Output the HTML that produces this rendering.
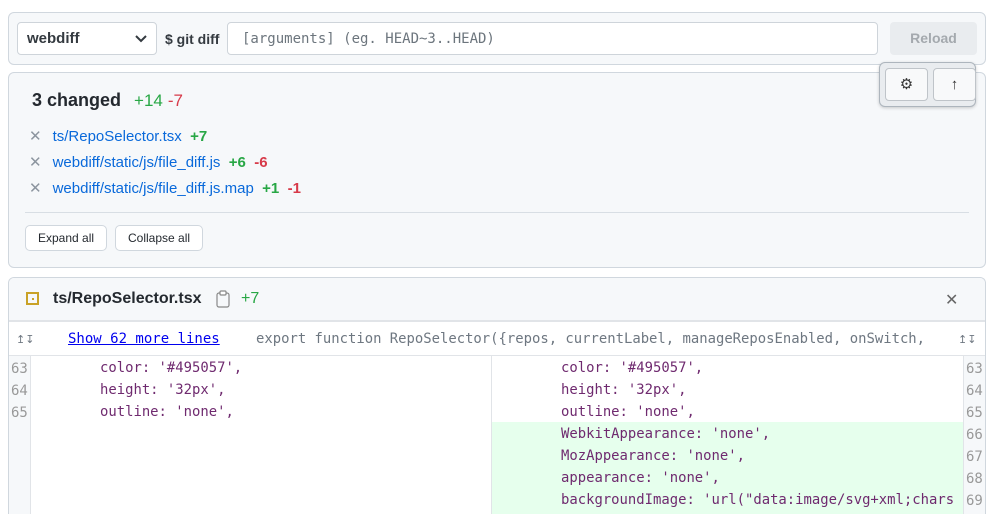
<!DOCTYPE html>
<html><head><meta charset="utf-8"><style>
*{box-sizing:border-box}
html,body{margin:0;width:996px;height:514px;overflow:hidden;background:#fff;font-family:"Liberation Sans",sans-serif;position:relative}
.card{position:absolute;left:8px;width:978px;border:1px solid #d0d7de;border-radius:6px;background:#f6f8fa}
.top{top:12px;height:53px}
.sel{position:absolute;left:8px;top:9px;width:140px;height:33px;border:1px solid #ced4da;border-radius:4px;background:#fff;font-weight:bold;font-size:15px;color:#343a40;padding:7px 0 0 9px}
.sel svg{position:absolute;right:9px;top:12px}
.lbl{position:absolute;left:156px;top:18px;font-weight:bold;font-size:14px;color:#343a40}
.inp{position:absolute;left:218px;top:9px;width:651px;height:33px;border:1px solid #ced4da;border-radius:4px;background:#fff;font-family:"DejaVu Sans Mono",monospace;font-size:14px;color:#6c757d;padding:8px 0 0 14px}
.rel{position:absolute;left:881px;top:9px;width:87px;height:33px;background:#e9ecef;border-radius:4px;color:#a4a9ae;font-weight:bold;font-size:14px;text-align:center;line-height:33px}
.sum{top:72px;height:196px}
.h{position:absolute;left:23px;top:17px;font-size:18px;font-weight:bold;color:#24292f}
.g{color:#28a745}.r{color:#d73a49}
.f{position:absolute;left:20px;font-size:15px;color:#0969da}
.f .x{color:#8c959f;margin-right:11px;font-size:15px}
.f b{font-weight:bold}
.hr{position:absolute;left:16px;right:16px;top:139px;border-top:1px solid #d8dee4}
.btn{position:absolute;top:152px;height:26px;border:1px solid #d0d7de;border-radius:5px;background:#fff;font-size:12px;color:#24292f;line-height:24px;padding:0 12px}
.tb{position:absolute;left:879px;top:62px;width:97px;height:45px;background:#e9ecef;border:1px solid #adb5bd;border-radius:6px;box-shadow:0 1px 3px rgba(0,0,0,.2)}
.tb div{position:absolute;top:5px;width:43px;height:33px;background:#f8f9fa;border:1px solid #bfc4c9;border-radius:4px;text-align:center;line-height:31px;font-size:15px;color:#333}
.file{position:absolute;left:8px;top:277px;width:978px;height:237px;border:1px solid #d0d7de;border-bottom:none;border-radius:6px 6px 0 0;background:#fff;overflow:hidden}
.fh{height:44px;background:#f6f8fa;border-bottom:2px solid #e1e4e8;position:relative}
.mono{font-family:"DejaVu Sans Mono",monospace;font-size:14px}
.exp{position:absolute;top:45px;left:0;right:0;height:33px;border-bottom:1px solid #e1e4e8;color:#6e7781}
.ln{position:absolute;width:22px;font-family:"DejaVu Sans Mono",monospace;font-size:14px;color:#999;text-align:center}
.code{position:absolute;font-family:"DejaVu Sans Mono",monospace;font-size:13.9px;color:#6f2a6f;white-space:pre;line-height:22px}
</style></head><body>
<div class="card top">
 <div class="sel">webdiff<svg width="12" height="8" viewBox="0 0 12 8"><path d="M1 1l5 5 5-5" stroke="#343a40" stroke-width="2" fill="none"/></svg></div>
 <div class="lbl">$ git diff</div>
 <div class="inp">[arguments] (eg. HEAD~3..HEAD)</div>
 <div class="rel">Reload</div>
</div>
<div class="card sum">
 <div class="h">3 changed <span style="font-weight:normal;font-size:17px;margin-left:8px" class="g">+14</span> <span style="font-weight:normal;font-size:17px" class="r">-7</span></div>
 <div class="f" style="top:54px"><span class="x">✕</span>ts/RepoSelector.tsx <b class="g">&nbsp;+7</b></div>
 <div class="f" style="top:80px"><span class="x">✕</span>webdiff/static/js/file_diff.js <b class="g">&nbsp;+6</b> <b class="r">&nbsp;-6</b></div>
 <div class="f" style="top:106px"><span class="x">✕</span>webdiff/static/js/file_diff.js.map <b class="g">&nbsp;+1</b> <b class="r">&nbsp;-1</b></div>
 <div class="hr"></div>
 <div class="btn" style="left:16px">Expand all</div>
 <div class="btn" style="left:106px">Collapse all</div>
</div>
<div class="file">
 <div class="fh">
  <div style="position:absolute;left:17px;top:14px;width:13px;height:13px;border:2px solid #c9a227"><div style="position:absolute;left:3.5px;top:3.5px;width:2px;height:2px;background:#c9a227"></div></div>
  <div style="position:absolute;left:44px;top:12px;font-weight:bold;font-size:16px;color:#24292f">ts/RepoSelector.tsx</div>
  <svg style="position:absolute;left:207px;top:12px" width="14" height="18" viewBox="0 0 14 18"><rect x="1" y="3" width="12" height="14" rx="2" fill="none" stroke="#888" stroke-width="1.2"/><rect x="4" y="1" width="6" height="4" rx="1" fill="#fff" stroke="#888" stroke-width="1.2"/></svg>
  <div style="position:absolute;left:232px;top:12px;font-size:16px" class="g">+7</div>
  <div style="position:absolute;left:936px;top:12px;font-size:16px;color:#666">✕</div>
 </div>
 <div class="exp">
  <span style="position:absolute;left:7px;top:10px;font-size:11px">↥↧</span>
  <span class="mono" style="position:absolute;left:59px;top:8px;color:#00e;text-decoration:underline">Show 62 more lines</span>
  <span class="mono" style="position:absolute;left:247px;top:8px;white-space:pre;font-size:13.9px">export function RepoSelector({repos, currentLabel, manageReposEnabled, onSwitch,</span>
  <span style="position:absolute;left:949px;top:10px;font-size:11px">↥↧</span>
 </div>
 <div style="position:absolute;left:0;top:78px;width:22px;height:200px;background:#f6f8fa;border-right:1px solid #e1e4e8"></div>
 <div style="position:absolute;left:482px;top:78px;width:1px;height:200px;background:#e1e4e8"></div>
 <div style="position:absolute;left:483px;top:144px;width:471px;height:120px;background:#e6ffed"></div>
 <div style="position:absolute;left:954px;top:78px;width:24px;height:200px;background:#f6f8fa;border-left:1px solid #e1e4e8"></div>
 <div class="ln" style="left:0;top:80px;line-height:22px;text-align:left;padding-left:2px">63<br>64<br>65</div>
 <div class="ln" style="left:955px;top:80px;line-height:22px;text-align:left;padding-left:2px">63<br>64<br>65<br>66<br>67<br>68<br>69</div>
 <div class="code" style="left:91px;top:79px">color: '#495057',
height: '32px',
outline: 'none',</div>
 <div class="code" style="left:552px;top:79px">color: '#495057',
height: '32px',
outline: 'none',
WebkitAppearance: 'none',
MozAppearance: 'none',
appearance: 'none',
backgroundImage: 'url("data:image/svg+xml;chars</div>
 <div class="code" style="left:483px;top:233px;color:#28a745">t=UTF-8,%3csvg xmlns='http://www.w3.org/2000/svg' vi</div>
</div>
<div class="tb"><div style="left:5px">⚙</div><div style="left:53px">↑</div></div>
</body></html>
